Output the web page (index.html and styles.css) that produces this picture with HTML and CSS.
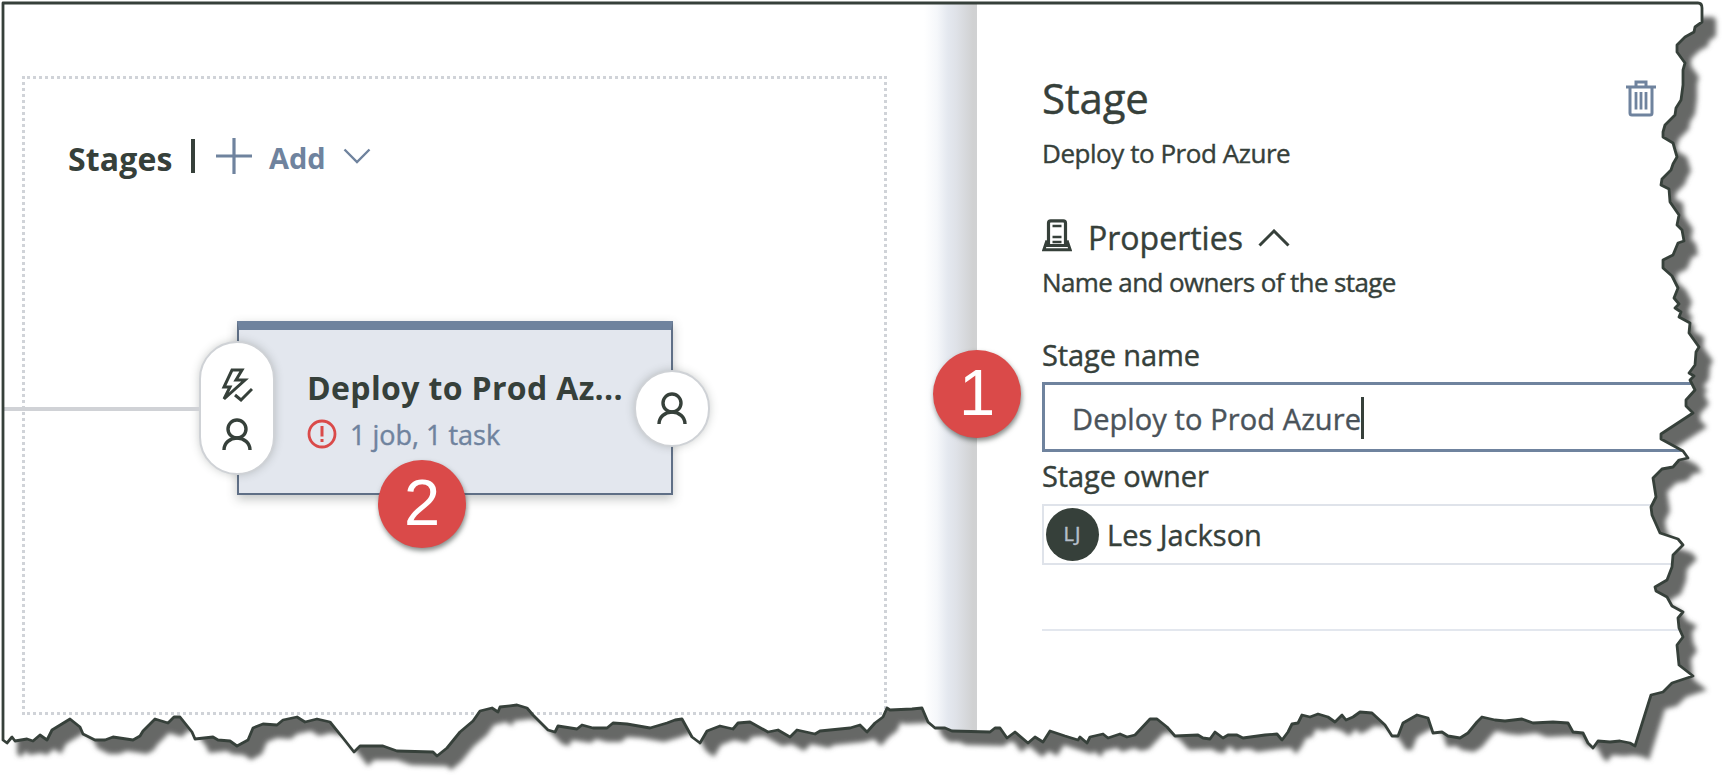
FILE: index.html
```html
<!DOCTYPE html>
<html lang="en">
<head>
<meta charset="utf-8">
<title>Stage properties</title>
<link rel="stylesheet" href="styles.css">
</head>
<body>
<main class="sheet">
  <svg class="sheet-shadow" width="1725" height="777" viewBox="0 0 1725 777">
    <defs>
      <path id="torn" d="M3 3H1698Q1702 3 1702 8V22L1695 27 1694 32 1685 37 1677 45 1677 52 1685 63 1683 70 1683 85 1681 100 1676 108 1675 115 1665 125 1663 132 1663 137 1673 143 1677 157 1673 164 1671 170 1662 179 1661 185 1669 189 1670 202 1679 215 1677 225 1682 230 1684 241 1678 243 1673 255 1663 260 1663 268 1672 276 1678 288 1674 298 1679 304 1675 308 1681 312 1679 317 1690 323 1689 333 1699 347 1696 352 1695 365 1689 373 1694 376 1690 380 1695 390 1686 400 1686 406 1693 413 1661 434 1661 439 1683 451 1688 458 1679 460 1673 467 1662 469 1653 478 1656 497 1651 507 1652 515 1660 533 1678 539 1683 545 1673 555 1672 567 1667 580 1655 587 1656 591 1667 597 1672 606 1683 612 1678 618 1679 628 1683 637 1677 645 1679 665 1693 676 1672 683 1663 692 1651 695 1635 746 1630 743 1620 741 1610 742 1598 741 1593 748 1588 743 1583 733 1573 732 1568 723 1553 722 1533 723 1522 719 1505 721 1495 720 1482 717 1477 722 1468 733 1460 738 1448 736 1442 732 1433 733 1428 718 1417 715 1403 723 1398 736 1392 736 1385 725 1372 713 1360 712 1353 717 1346 720 1342 715 1335 722 1328 717 1318 714 1310 717 1302 715 1298 723 1292 724 1288 732 1282 740 1277 734 1265 735 1243 738 1237 735 1228 735 1223 738 1215 732 1210 739 1203 738 1198 735 1175 736 1167 727 1157 719 1150 719 1135 735 1127 737 1120 734 1108 738 1103 734 1090 737 1087 743 1080 737 1078 740 1065 736 1050 731 1043 742 1035 737 1028 743 1015 732 1007 738 1000 728 995 728 990 732 952 731 945 728 935 728 928 722 922 708 912 709 890 710 887 708 883 717 875 723 867 732 860 725 850 728 820 731 815 734 797 730 790 737 778 730 768 732 750 722 738 723 733 729 720 726 707 731 700 743 692 737 682 719 675 720 667 723 650 728 627 724 613 723 607 728 593 728 582 725 577 729 558 726 555 732 548 730 533 715 527 708 517 705 500 707 498 712 492 708 480 711 473 721 460 732 447 748 437 756 433 752 397 751 383 746 360 746 354 752 343 738 330 722 317 719 305 722 297 717 283 720 277 725 263 724 253 728 248 740 237 746 230 741 218 740 213 737 195 739 192 732 180 717 174 717 168 723 155 719 143 731 140 736 133 740 113 737 105 740 95 740 83 734 80 727 70 719 52 730 47 740 40 735 33 741 27 739 15 741 12 737 7 743 3 740Z"/>
      <clipPath id="torn-clip"><use href="#torn"/></clipPath>
      <filter id="soften" x="-2%" y="-3%" width="104%" height="106%"><feGaussianBlur stdDeviation="2.800"/></filter>
      <g id="person" fill="none" stroke="#36403a" stroke-width="3.4">
        <circle cx="15" cy="11" r="9"/>
        <path d="M2 32C2 25 8 20 15 20S28 25 28 32"/>
      </g>
    </defs>
    <use href="#torn" x="14" y="14" fill="#666866" filter="url(#soften)"/>
  </svg>

  <div class="paper">
    <section class="canvas">
      <div class="stages">
        <header class="stages-head">
          <h2>Stages</h2>
          <span class="bar"></span>
          <svg class="plus" width="36" height="36" viewBox="0 0 36 36"><path d="M18 0V36M0 18H36" stroke="#6f839e" stroke-width="3.2"/></svg>
          <span class="add">Add</span>
          <svg class="down" width="28" height="16" viewBox="0 0 28 16"><path d="M1.500 1.500L14 14 26.500 1.500" fill="none" stroke="#6f839e" stroke-width="2.400"/></svg>
        </header>
        <div class="card">
          <div class="card-title">Deploy to Prod Az...</div>
          <div class="card-info">
            <svg width="30" height="30" viewBox="0 0 30 30"><circle cx="15" cy="15" r="13" fill="none" stroke="#da4a49" stroke-width="2.800"/><path d="M15 7V17.500M15 20V23" stroke="#da4a49" stroke-width="3"/></svg>
            <span>1 job, 1 task</span>
          </div>
          <div class="pre">
            <svg width="32" height="34" viewBox="0 0 32 34" fill="none" stroke="#36403a" stroke-width="3"><path d="M11 2H21L15 12H24L3 31 9 19H3Z"/><path d="M14 27L20 32 31 21"/></svg>
            <svg width="30" height="33" viewBox="0 0 30 33"><use href="#person"/></svg>
          </div>
          <div class="post"><svg width="30" height="33" viewBox="0 0 30 33"><use href="#person"/></svg></div>
          <div class="callout callout-two">2</div>
        </div>
      </div>
      <div class="link"></div>
    </section>

    <section class="panel">
      <header class="panel-head">
        <h1>Stage</h1>
        <svg width="30" height="37" viewBox="0 0 30 37" fill="none" stroke="#6f839e"><path d="M0 7H30" stroke-width="3.200"/><path d="M10 6V2H20V6M4 8V33Q4 35 6 35H24Q26 35 26 33V8" stroke-width="3"/><path d="M10 12V29.500M15 12V29.500M20 12V29.500" stroke-width="2.800"/></svg>
      </header>
      <p class="sub">Deploy to Prod Azure</p>
      <div class="props">
        <svg class="server" width="30" height="33" viewBox="0 0 30 33" fill="none" stroke="#36403a"><path d="M6.500 25V4Q6.500 1.800 8.700 1.800H21.300Q23.500 1.800 23.500 4V25" stroke-width="3.200"/><path d="M10.500 7H19.500M10.500 18H19.500M10.500 23H19.500" stroke-width="2.400"/><path d="M5 21.500L1.800 30.800H28.200L25 21.500M4.500 26.500H25.500" stroke-width="3"/></svg>
        <h3>Properties</h3>
        <svg class="up" width="32" height="18" viewBox="0 0 32 18"><path d="M1.500 16.500L16 2 30.500 16.500" fill="none" stroke="#36403a" stroke-width="3"/></svg>
      </div>
      <p class="desc">Name and owners of the stage</p>
      <div class="label">Stage name</div>
      <div class="input"><span>Deploy to Prod Azure</span><i class="caret"></i></div>
      <div class="label label-owner">Stage owner</div>
      <div class="owner"><span class="avatar">LJ</span><span>Les Jackson</span></div>
      <div class="rule"></div>
      <div class="callout callout-one">1</div>
    </section>
  </div>

  <svg class="sheet-edge" width="1725" height="777" viewBox="0 0 1725 777"><use href="#torn" fill="none" stroke="#36403a" stroke-width="2.800" stroke-linejoin="round"/></svg>
</main>
</body>
</html>
```
FILE: styles.css
```css
* { box-sizing: border-box; }

body {
  margin: 0;
  background: #fff;
  color: #36403a;
  font-family: "Open Sans", "Noto Sans", sans-serif;
}

h1, h2, h3, p { margin: 0; font-weight: 400; }
svg { display: block; flex: none; }

.sheet {
  position: relative;
  width: 1725px;
  height: 777px;
  overflow: hidden;
}

.sheet-shadow, .sheet-edge {
  position: absolute;
  top: 0;
  left: 0;
}

.paper {
  position: relative;
  display: flex;
  height: 777px;
  background: #fff;
  clip-path: url(#torn-clip);
}

/* Pipeline canvas */
.canvas {
  position: relative;
  width: 977px;
  padding: 76px 0 0 22px;
  background: linear-gradient(90deg, #fff 924px, #f5f7fa 937px, #e4e8ef 948px, #dfe2e8 956px, #d0d1d2 973px);
}

.stages {
  width: 865px;
  height: 639px;
  border: 3px dotted #d0d3d8;
  padding: 59px 0 0 43px;
}

.stages-head {
  display: flex;
  align-items: center;
  height: 36px;
}

.stages-head h2 {
  width: 123px;
  padding-top: 6px;
  font-size: 32px;
  font-weight: 700;
  line-height: 36px;
  letter-spacing: 0.150px;
}

.bar { width: 4px; height: 34px; background: #36403a; }
.plus { margin-left: 21px; }

.add {
  width: 74px;
  margin-left: 17px;
  padding-top: 4px;
  font-size: 29px;
  font-weight: 700;
  line-height: 36px;
  color: #6f839e;
}

.card {
  position: relative;
  width: 436px;
  height: 174px;
  margin: 147px 0 0 169px;
  padding: 36px 0 0 68px;
  border: 2px solid #5f6f86;
  border-top: 9px solid #6f839e;
  background: #e3e7ee;
  box-shadow: 0 4px 10px rgba(54, 64, 58, .3);
}

.card-title {
  font-size: 32px;
  font-weight: 700;
  line-height: 44px;
  letter-spacing: 0.350px;
  white-space: nowrap;
}

.card-info {
  display: flex;
  align-items: center;
  gap: 13px;
  height: 40px;
  margin-top: 4px;
  font-size: 27px;
  color: #6f839e;
  -webkit-text-stroke: 0.4px #6f839e;
}

.pre, .post {
  position: absolute;
  display: flex;
  flex-direction: column;
  align-items: center;
  background: #fff;
  border: 2px solid #cfd2d6;
  border-radius: 38px;
  box-shadow: 0 0 9px rgba(54, 64, 58, .25);
  width: 76px;
}

.pre {
  left: -40px;
  top: 11px;
  height: 134px;
  padding-top: 25px;
  gap: 16px;
}

.post {
  right: -39px;
  top: 40px;
  height: 77px;
  justify-content: center;
}

.link {
  position: absolute;
  left: 0;
  top: 407px;
  width: 199px;
  height: 4px;
  background: #d0d2d6;
}

.callout {
  position: absolute;
  width: 88px;
  height: 88px;
  border-radius: 50%;
  background: #da4a49;
  color: #fff;
  font: 65px/85px "Liberation Sans", sans-serif;
  text-align: center;
  box-shadow: 1px 3px 5px rgba(54, 64, 58, .6);
}

.callout-two { left: 139px; top: 130px; }
.callout-one { left: -44px; top: 350px; }

/* Properties panel */
.panel {
  position: relative;
  flex: 1;
  padding: 70px 0 0 65px;
  -webkit-text-stroke: 0.4px currentColor;
}

.panel .callout { -webkit-text-stroke: 0; }

.panel-head {
  display: flex;
  justify-content: space-between;
  align-items: center;
  height: 56px;
  padding-right: 69px;
}

.panel-head h1 {
  font-size: 42px;
  line-height: 56px;
  letter-spacing: -0.200px;
}

.sub, .desc {
  font-size: 26px;
  line-height: 36px;
  white-space: nowrap;
}

.sub { margin-top: 9px; letter-spacing: -0.460px; }
.desc { margin-top: 6px; letter-spacing: -0.620px; }

.props {
  display: flex;
  align-items: center;
  height: 40px;
  margin-top: 47px;
}

.server { margin-bottom: 6px; }

.props h3 {
  width: 170px;
  margin-left: 16px;
  font-size: 32px;
  line-height: 40px;
}

.label {
  margin-top: 37px;
  font-size: 29px;
  line-height: 36px;
  letter-spacing: -0.100px;
}

.input {
  display: flex;
  align-items: center;
  height: 70px;
  margin-top: 9px;
  padding: 2px 0 0 27px;
  border: 3px solid #6f839e;
  font-size: 29px;
  letter-spacing: 0.100px;
  color: #4a535a;
}

.caret { width: 3px; height: 42px; background: #36403a; }
.label-owner { margin-top: 6px; }

.owner {
  display: flex;
  align-items: center;
  gap: 8px;
  height: 61px;
  margin-top: 10px;
  padding-left: 2px;
  border: 2px solid #dfe3ea;
  font-size: 29px;
}

.avatar {
  width: 53px;
  height: 53px;
  border-radius: 50%;
  background: #36403a;
  color: #b6bfca;
  font: 20px/52px "Noto Sans", sans-serif;
  letter-spacing: 1px;
  text-align: center;
}

.rule { height: 2px; margin-top: 64px; background: #e3e7ee; }
```
